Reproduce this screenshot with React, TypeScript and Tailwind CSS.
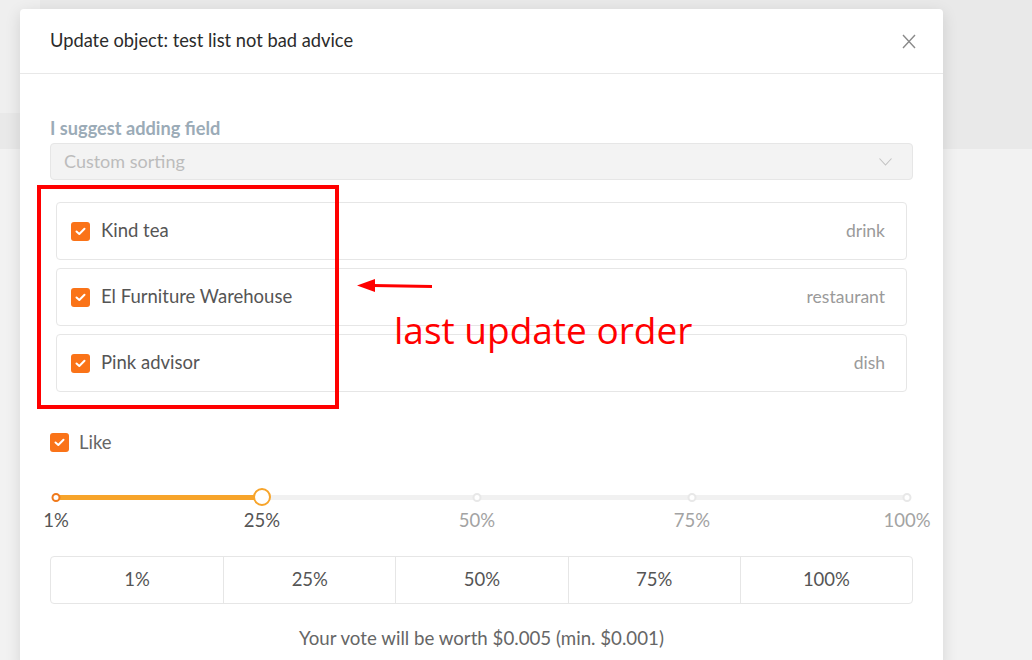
const items = [
  { name: "Kind tea", type: "drink" },
  { name: "El Furniture Warehouse", type: "restaurant" },
  { name: "Pink advisor", type: "dish" },
];

const marks = [
  { label: "1%", x: 6, active: true },
  { label: "25%", x: 212, active: true },
  { label: "50%", x: 427, active: false },
  { label: "75%", x: 642, active: false },
  { label: "100%", x: 857, active: false },
];

function Check() {
  return (
    <span className="flex h-[19px] w-[19px] shrink-0 items-center justify-center rounded-[3px] bg-[#fa7318]">
      <svg width="11" height="9" viewBox="0 0 11 9" fill="none">
        <path d="M1.5 4.5 L4.3 7 L9.5 1.8" stroke="white" strokeWidth="2" strokeLinecap="round" strokeLinejoin="round" />
      </svg>
    </span>
  );
}

export default function App() {
  return (
    <div className="relative h-[660px] w-[1032px] overflow-hidden bg-[#f2f2f2] pl-[20px] pt-[9px] font-['Lato','Open_Sans',sans-serif]">
      {/* page behind the overlay */}
      <div className="absolute left-0 right-0 top-0 h-[149px] bg-[#e9e9e9]" />
      <div className="absolute left-0 top-0 h-[113px] w-[40px] bg-[#efefef]" />

      <div className="relative z-10 w-[923px] rounded-[4px] bg-white shadow-[0_4px_16px_rgba(0,0,0,0.12)]">
        <div className="flex h-[65px] items-center justify-between border-b border-[#e8e8e8] pl-[30px] pr-[27px]">
          <h1 className="text-[18.3px] text-[#2b2b2b]">Update object: test list not bad advice</h1>
          <svg width="14" height="15" viewBox="0 0 14 15" fill="none">
            <path d="M1 1 L13 14 M13 1 L1 14" stroke="#8a8a8a" strokeWidth="1.4" />
          </svg>
        </div>

        <div className="px-[30px] pb-[20px] pt-[44px]">
          <div className="h-[20px] text-[18.2px] font-bold leading-[20px] text-[#9babb7]">I suggest adding field</div>
          <div className="mt-[5px] flex h-[37px] items-center justify-between rounded-[4px] border border-[#e6e6e6] bg-[#f3f3f3] pl-[13px] pr-[20px]">
            <span className="text-[18px] text-[#bcbcbc]">Custom sorting</span>
            <svg width="13" height="8" viewBox="0 0 13 8" fill="none">
              <path d="M0.5 0.5 L6.5 7 L12.5 0.5" stroke="#c2c2c2" strokeWidth="1.1" />
            </svg>
          </div>

          <div className="mt-[22px] flex flex-col gap-[8px] px-[6px]">
            {items.map((it) => (
              <div key={it.name} className="flex h-[58px] items-center rounded-[4px] border border-[#e6e6e6] pl-[14px] pr-[21px]">
                <Check />
                <span className="ml-[11px] text-[18.5px] text-[#555555]">{it.name}</span>
                <span className="ml-auto text-[17.5px] text-[#9a9a9a]">{it.type}</span>
              </div>
            ))}
          </div>

          <div className="mt-[37px] flex items-center">
            <Check />
            <span className="ml-[10px] text-[18.5px] text-[#666666]">Like</span>
          </div>

          <div className="relative mt-[30px] h-[46px]">
            <div className="absolute left-[6px] right-[6px] top-[8px] h-[5px] rounded-full bg-[#f1f1f1]" />
            <div className="absolute left-[6px] top-[8px] h-[5px] w-[206px] bg-[#f7a42a]" />
            {marks.map((m, i) => (
              <div key={m.label}>
                {i === 1 ? (
                  <span
                    className="absolute top-[1px] h-[18px] w-[18px] -translate-x-1/2 rounded-full border-2 border-[#f7a42a] bg-white"
                    style={{ left: m.x }}
                  />
                ) : (
                  <span
                    className={
                      "absolute top-[6px] h-[9px] w-[9px] -translate-x-1/2 rounded-full border-2 bg-white " +
                      (m.active ? "border-[#f07a1c]" : "border-[#e8e8e8]")
                    }
                    style={{ left: m.x }}
                  />
                )}
                <span
                  className={
                    "absolute top-[23px] -translate-x-1/2 text-[18.5px] leading-[20px] " +
                    (m.active ? "text-[#555555]" : "text-[#a3a3a3]")
                  }
                  style={{ left: m.x }}
                >
                  {m.label}
                </span>
              </div>
            ))}
          </div>

          <div className="mt-[23px] grid h-[48px] grid-cols-5 rounded-[4px] border border-[#e6e6e6]">
            {["1%", "25%", "50%", "75%", "100%"].map((p, i) => (
              <div
                key={p}
                className={"flex items-center justify-center text-[18.5px] text-[#555555] " + (i > 0 ? "border-l border-[#e6e6e6]" : "")}
              >
                {p}
              </div>
            ))}
          </div>

          <p className="mt-[22px] text-center text-[18.7px] leading-[24px] text-[#666666]">
            Your vote will be worth $0.005 (min. $0.001)
          </p>
        </div>
      </div>

      {/* annotation overlay */}
      <div className="absolute left-[37px] top-[185px] z-20 h-[224px] w-[302px] border-4 border-[#ff0000]" />
      <svg className="absolute left-[355px] top-[277px] z-20" width="80" height="18" viewBox="0 0 80 18">
        <path d="M77 9.5 L18 8.5" stroke="#ff0000" strokeWidth="3" />
        <path d="M2 8.5 L20 2 L20 15 Z" fill="#ff0000" />
      </svg>
      <div className="absolute left-[394px] top-[306px] z-20 font-['Open_Sans',sans-serif] text-[37px] leading-[48px] text-[#ff0000]">
        last update order
      </div>
    </div>
  );
}
